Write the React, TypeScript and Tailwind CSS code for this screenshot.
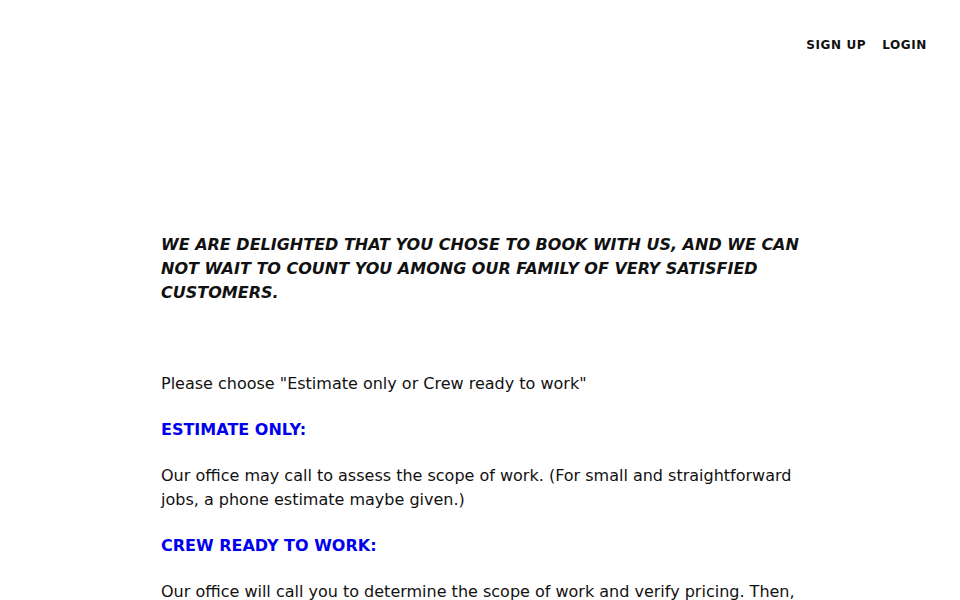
import React from 'react';

const App: React.FC = () => {
    return (
        <div className="min-h-screen bg-white text-[#111111]" style={{ fontFamily: '"DejaVu Sans", sans-serif' }}>
            <nav className="flex justify-end items-center gap-4 pt-[33px] pr-[33px] h-[57px]">
                <a href="#" className="text-[12px] font-bold tracking-[0.05em] leading-4">SIGN UP</a>
                <a href="#" className="text-[12px] font-bold tracking-[0.05em] leading-4">LOGIN</a>
            </nav>
            <main className="max-w-[640px] mx-auto pl-px pt-[176px] text-[16px] leading-6">
                <h1 className="font-bold italic text-[16px] leading-6">
                    WE ARE DELIGHTED THAT YOU CHOSE TO BOOK WITH US, AND WE CAN NOT WAIT TO COUNT YOU AMONG OUR FAMILY OF VERY SATISFIED CUSTOMERS.
                </h1>
                <div className="mt-[67px] flex flex-col gap-[22px]">
                    <p>Please choose "Estimate only or Crew ready to work"</p>
                    <p className="font-bold text-[#0000ee]">ESTIMATE ONLY:</p>
                    <p>Our office may call to assess the scope of work. (For small and straightforward jobs, a phone estimate maybe given.)</p>
                    <p className="font-bold text-[#0000ee]">CREW READY TO WORK:</p>
                    <p>Our office will call you to determine the scope of work and verify pricing. Then, a crew will be dispatched to your location.</p>
                </div>
            </main>
        </div>
    );
};

export default App;
